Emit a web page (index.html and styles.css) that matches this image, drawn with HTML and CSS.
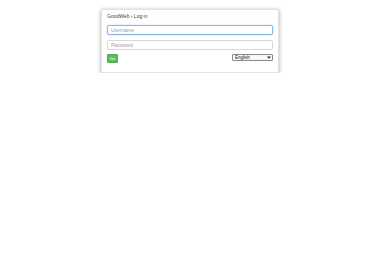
FILE: index.html
```html
<!DOCTYPE html>
<html>
<head>
<meta charset="utf-8">
<link rel="stylesheet" href="styles.css">
</head>
<body>
<div class="card">
  <div class="title">GoodWeb › Log in</div>
  <form class="form">
    <input class="field focus" type="text" placeholder="Username">
    <input class="field" type="password" placeholder="Password">
    <div class="row">
      <button class="go" type="button">Go</button>
      <span class="lang-wrap">
        <select class="lang"><option>English</option></select>
        <svg class="arrow" width="4" height="3" viewBox="0 0 4 3"><path d="M0 0.5 L4 0.5 L2 2.8 Z" fill="#333"/></svg>
      </span>
    </div>
  </form>
</div>
</body>
</html>
```
FILE: styles.css
```css
html, body { margin: 0; padding: 0; background: #fff; }
body { font-family: "Liberation Sans", Arial, sans-serif; }
.card {
  box-sizing: border-box;
  width: 178px;
  margin: 9px auto 0;
  padding: 3px 5px 9px;
  background: #fff;
  border: 1px solid #e2e2e2;
  box-shadow: 0 1px 4px rgba(0,0,0,0.35);
}
.title { font-size: 5px; line-height: 7px; color: #444; margin-bottom: 5px; }
.form { display: flex; flex-direction: column; gap: 5px; }
.field {
  box-sizing: border-box;
  width: 100%;
  height: 10px;
  margin: 0;
  padding: 0 3px;
  border: 1px solid #d8d8d8;
  border-radius: 2px;
  font-family: "Liberation Sans", Arial, sans-serif;
  font-size: 5px;
  color: #555;
  outline: none;
  background: #fff;
}
.field::placeholder { color: #a0a0a0; }
.field.focus { border-color: #8ab6e0; box-shadow: 0 0 2px rgba(102,175,233,0.5); }
.row { display: flex; justify-content: space-between; align-items: flex-start; margin-top: -1px; }
.go {
  box-sizing: border-box;
  width: 11px;
  height: 9px;
  margin: 0;
  padding: 0;
  border: 1px solid #4cae4c;
  border-radius: 1px;
  background: #5cb85c;
  color: #fff;
  font-family: "Liberation Sans", Arial, sans-serif;
  font-size: 4px;
}
.lang-wrap { position: relative; display: block; width: 41px; height: 7px; }
.lang {
  -webkit-appearance: none;
  appearance: none;
  box-sizing: border-box;
  display: block;
  width: 41px;
  height: 7px;
  margin: 0;
  padding: 0 0 0 2px;
  font-family: "Liberation Sans", Arial, sans-serif;
  font-size: 4.5px;
  line-height: 5px;
  color: #222;
  border: 1px solid #8a8a8a;
  border-radius: 1px;
  background: #f8f8f8;
}
.arrow { position: absolute; right: 2px; top: 2px; pointer-events: none; }
```
